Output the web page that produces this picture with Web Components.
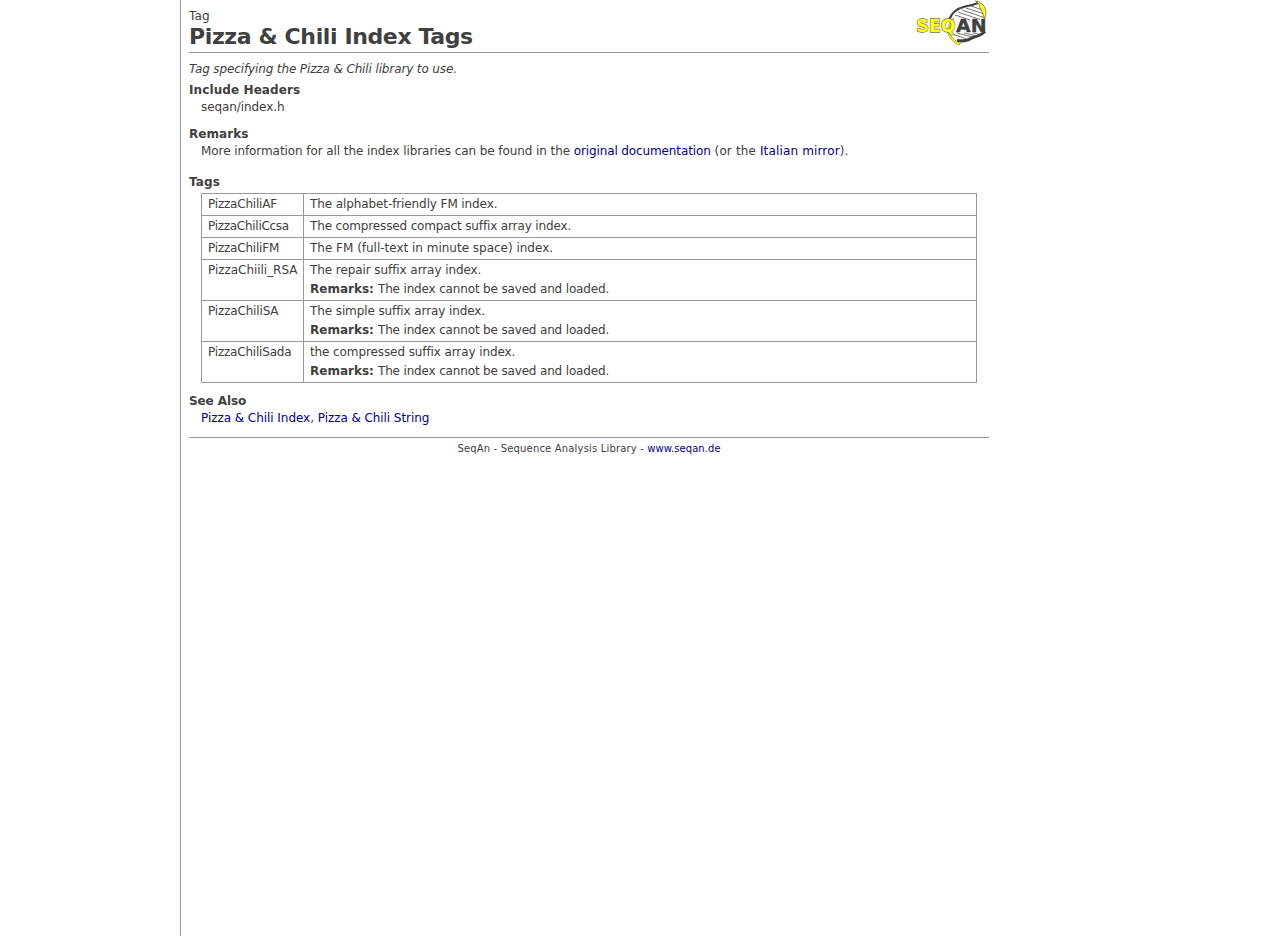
<!DOCTYPE html>
<html lang="en">
<head>
<meta charset="utf-8">
<title>Pizza &amp; Chili Index Tags</title>
<style>
body { margin: 0; background: #fff; font: 12px/17px "DejaVu Sans", Verdana, sans-serif; color: #404040; }
</style>
</head>
<body>
<doc-page>
  <doc-header><t-x slot="kind" track=".2">Tag</t-x><t-x slot="title" track="-.38">Pizza &amp; Chili Index Tags</t-x><seqan-logo slot="logo"></seqan-logo></doc-header>
  <doc-summary><t-x track="-.125">Tag specifying the Pizza &amp; Chili library to use.</t-x></doc-summary>
  <doc-section heading="Include Headers" track=".1" style="--gap:10px"><t-x track="-.08">seqan/index.h</t-x></doc-section>
  <doc-section heading="Remarks" track=".05" style="--gap:14px"><t-x track="-.078">More information for all the index libraries can be found in the </t-x><doc-link track="-.125">original documentation</doc-link><t-x track=".13"> (or the </t-x><doc-link track=".15">Italian mirror</doc-link><t-x>).</t-x></doc-section>
  <doc-section heading="Tags" track=".15" style="--gap:10px">
    <tag-table>
      <tag-row name="PizzaChiliAF" track="-.2"><t-x track="-.1">The alphabet-friendly FM index.</t-x></tag-row>
      <tag-row name="PizzaChiliCcsa" track="-.28"><t-x track="-.14">The compressed compact suffix array index.</t-x></tag-row>
      <tag-row name="PizzaChiliFM" track="-.2"><t-x track="-.01">The FM (full-text in minute space) index.</t-x></tag-row>
      <tag-row name="PizzaChiili_RSA" track="-.04"><t-x track="-.08">The repair suffix array index.</t-x><t-x slot="remarks" track="-.16">The index cannot be saved and loaded.</t-x></tag-row>
      <tag-row name="PizzaChiliSA" track="-.16"><t-x track="-.1">The simple suffix array index.</t-x><t-x slot="remarks" track="-.16">The index cannot be saved and loaded.</t-x></tag-row>
      <tag-row name="PizzaChiliSada" track="-.2"><t-x track="-.1">the compressed suffix array index.</t-x><t-x slot="remarks" track="-.16">The index cannot be saved and loaded.</t-x></tag-row>
    </tag-table>
  </doc-section>
  <doc-section heading="See Also" track="-.1" style="--gap:10px"><doc-link track="-.05">Pizza &amp; Chili Index</doc-link><t-x>, </t-x><doc-link track="-.07">Pizza &amp; Chili String</doc-link></doc-section>
  <doc-footer><t-x track=".17">SeqAn - Sequence Analysis Library - </t-x><doc-link track=".05">www.seqan.de</doc-link></doc-footer>
</doc-page>
<script>
function define(name, html, setup) {
  const template = document.createElement('template');
  template.innerHTML = html;
  customElements.define(name, class extends HTMLElement {
    constructor() {
      super();
      this.attachShadow({ mode: 'open' }).append(template.content.cloneNode(true));
      if (setup) setup(this, this.shadowRoot);
    }
  });
}
// "track" is the letter-spacing in pixels.
const track = (host, el) => { el.style.letterSpacing = (host.getAttribute('track') || 0) + 'px'; };

define('t-x', `<style>:host{display:inline}span{white-space:pre}</style><span><slot></slot></span>`,
  (e, r) => track(e, r.querySelector('span')));
define('doc-link', `<style>:host{display:inline}a{color:#000090;text-decoration:none;white-space:pre}</style><a href="#"><slot></slot></a>`,
  (e, r) => track(e, r.querySelector('a')));
define('doc-page', `<style>:host{display:block;box-sizing:border-box;min-height:100vh;margin-left:180px;padding-left:8px;border-left:1px solid #999}
main{width:800px}</style><main><slot></slot></main>`);
define('doc-header', `<style>:host{display:flex;justify-content:space-between;height:52px;border-bottom:1px solid #999}
.k{padding-top:8px;line-height:17px}h1{margin:0;font-size:22px;line-height:24px;font-weight:bold}</style>
<div><div class="k"><slot name="kind"></slot></div><h1><slot name="title"></slot></h1></div><slot name="logo"></slot>`);
define('doc-summary', `<style>:host{display:block;padding-top:8px;height:21px;font-style:italic}</style><slot></slot>`);
define('doc-section', `<style>:host{display:block;margin-bottom:var(--gap)}h2{margin:0;font-size:inherit;line-height:17px}.b{margin:0 12px}</style><h2></h2><div class="b"><slot></slot></div>`,
  (e, r) => { const h = r.querySelector('h2'); h.textContent = e.getAttribute('heading'); track(e, h); });
define('tag-table', `<style>:host{display:block;margin-top:2px;border-top:1px solid #999}</style><slot></slot>`);
define('tag-row', `<style>:host{display:grid;grid-template-columns:102px 1fr;border:1px solid #999;border-top:0}
div{padding:2px 6px}.n{border-right:1px solid #999}p{margin:2px 0 0}</style><div class="n"></div><div><slot></slot><p><b>Remarks: </b><slot name="remarks"></slot></p></div>`,
  (e, r) => {
    const n = r.querySelector('.n');
    n.textContent = e.getAttribute('name');
    track(e, n);
    if (!e.querySelector('[slot=remarks]')) r.querySelector('p').remove();
  });
define('doc-footer', `<style>:host{display:block;border-top:1px solid #999;text-align:center;font-size:10px;line-height:20px;padding-top:1px}</style><slot></slot>`);
define('seqan-logo', `<style>:host{display:block;width:74px;height:50px}svg{display:block}text{font:bold 18.5px "DejaVu Sans",sans-serif}</style>
<svg width="74" height="50" viewBox="915 0 74 50">
  <g fill="none" stroke="#666" stroke-width=".9">
    <path d="M966 8L983 13.500M962 10L984 17.500M958 12L980 19.500M955 15L970 20M971 6L981 9.500M952 34L967 39M957 33L972 37M964 33L977 36M973 33L980 34.500"/>
  </g>
  <path d="M949.500 19Q953 9.500 965 6.500Q972 5.500 978 3" fill="none" stroke="#404040" stroke-width="2.200"/>
  <path d="M985 31.500Q980 36 973 37.500Q966 42 957 40.500" fill="none" stroke="#404040" stroke-width="3"/>
  <path d="M975.500 .8Q983.500 2.500 985.800 10Q986.500 15 984.500 19Q983 12 980.500 9Q980 4 975.500 .8Z" fill="#ffff30" stroke="#777700" stroke-width=".8"/>
  <path d="M954 18Q946.500 29 951 36Q954 41 960.500 43.500L959 45Q950 41.500 947.700 32Q947 24 954 18Z" fill="#ffff30" stroke="#999900" stroke-width=".8"/>
  <text x="916.500" y="32" textLength="39" lengthAdjust="spacingAndGlyphs" fill="#ffff20" stroke="#77772a" stroke-width="1.300" paint-order="stroke">SEQ</text>
  <text x="956" y="32" textLength="30.500" lengthAdjust="spacingAndGlyphs" fill="#404040" stroke="#404040" stroke-width=".4">AN</text>
</svg>`);
</script>
</body>
</html>
